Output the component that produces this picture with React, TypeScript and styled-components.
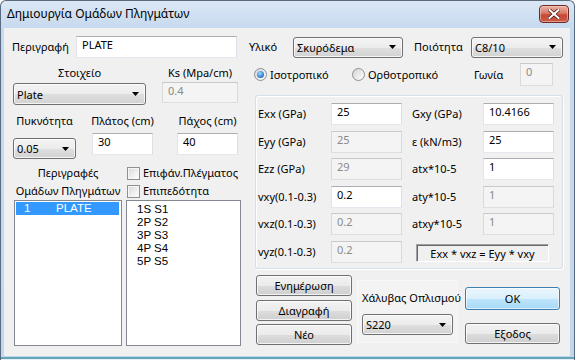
import React from 'react';
import styled, { createGlobalStyle, css } from 'styled-components';

const GlobalStyle = createGlobalStyle`
  html, body { margin: 0; padding: 0; background: #ffffff; }
  body { font-family: "Noto Sans", Tahoma, sans-serif; font-size: 11px; color: #000; }
  * { box-sizing: border-box; }
`;

const Window = styled.div`
  width: 575px;
  height: 360px;
  display: flex;
  flex-direction: column;
  border: 1px solid #5a6b80;
  border-bottom: none;
  border-radius: 6px 6px 0 0;
  background: linear-gradient(to bottom, #dbe7f5 0px, #c7daef 27px, #c2d6ed 100%);
  box-shadow: inset 0 -1px 0 #e6eff7, inset 0 -3px 0 #64a6b9;
  overflow: hidden;
`;

const TitleBar = styled.div`
  height: 27px;
  flex: none;
  display: flex;
  align-items: flex-start;
  justify-content: space-between;
  padding-left: 6px;
`;

const Title = styled.span`
  font: 12px "Noto Sans", sans-serif;
  line-height: 16px;
  margin-top: 5px;
  color: #000;
`;

const CloseButton = styled.div`
  width: 30px;
  height: 18px;
  margin: 4px 5px 0 0;
  border: 1px solid #6e2a22;
  border-radius: 4px;
  background: linear-gradient(to bottom, #eab0a4 0%, #d97a68 45%, #c84a36 55%, #c95a45 100%);
  box-shadow: inset 0 0 0 1px rgba(255, 220, 210, 0.5);
  display: flex;
  align-items: center;
  justify-content: center;
`;

const Client = styled.div`
  flex: 1;
  margin: 0 4px 4px 3px;
  background: #f0f0f0;
  display: flex;
`;

const LeftCol = styled.div`
  width: 245px;
  flex: none;
  display: flex;
  flex-direction: column;
`;

const RightCol = styled.div`
  flex: 1;
  display: flex;
  flex-direction: column;
`;

const Row = styled.div<{ $top: number; $left?: number; $h?: number }>`
  display: flex;
  align-items: center;
  margin-top: ${(p) => p.$top}px;
  padding-left: ${(p) => p.$left ?? 0}px;
  ${(p) => (p.$h ? `height: ${p.$h}px;` : '')}
`;

const FieldRow = styled.div<{ $top: number; $left?: number }>`
  display: flex;
  align-items: flex-start;
  margin-top: ${(p) => p.$top}px;
  padding-left: ${(p) => p.$left ?? 0}px;
`;

const Field = styled.div<{ $w: number; $ml?: number }>`
  width: ${(p) => p.$w}px;
  margin-left: ${(p) => p.$ml ?? 0}px;
  display: flex;
  flex-direction: column;
  align-items: center;
  flex: none;
`;

const Label = styled.span<{ $w?: number; $ml?: number }>`
  display: inline-block;
  ${(p) => (p.$w ? `width: ${p.$w}px;` : '')}
  margin-left: ${(p) => p.$ml ?? 0}px;
  white-space: nowrap;
  line-height: 14px;
  flex: none;
`;

const TextBox = styled.div<{ $w: number; $h?: number; $mt?: number; $disabled?: boolean }>`
  width: ${(p) => p.$w}px;
  height: ${(p) => p.$h ?? 22}px;
  margin-top: ${(p) => p.$mt ?? 0}px;
  flex: none;
  padding: 1px 5px 0;
  line-height: 14px;
  white-space: nowrap;
  border: 1px solid;
  border-color: #abadb3 #dbdfe6 #e3e9ef #e2e3ea;
  background: #ffffff;
  color: #000;
  ${(p) =>
    p.$disabled &&
    css`
      background: #f4f4f4;
      border-color: #c9c9c9 #d9d9d9 #dedede #d9d9d9;
      color: #8a8a8a;
    `}
`;

const Dropdown = styled.div<{ $w: number; $h?: number; $mt?: number }>`
  width: ${(p) => p.$w}px;
  height: ${(p) => p.$h ?? 21}px;
  margin-top: ${(p) => p.$mt ?? 0}px;
  flex: none;
  display: flex;
  align-items: center;
  justify-content: space-between;
  padding: 0 6px 0 3px;
  border: 1px solid #707070;
  border-radius: 3px;
  background: linear-gradient(to bottom, #f4f4f4 0%, #ececec 50%, #dfdfdf 51%, #d2d2d2 100%);
  box-shadow: inset 0 0 0 1px rgba(255, 255, 255, 0.75);
  white-space: nowrap;
`;

const Button = styled.div<{ $h?: number; $mt?: number; $default?: boolean }>`
  height: ${(p) => p.$h ?? 21}px;
  margin-top: ${(p) => p.$mt ?? 0}px;
  display: flex;
  align-items: center;
  justify-content: center;
  border: 1px solid #707070;
  border-radius: 3px;
  background: linear-gradient(to bottom, #f2f2f2 0%, #ebebeb 50%, #dddddd 51%, #cfcfcf 100%);
  box-shadow: inset 0 0 0 1px rgba(255, 255, 255, 0.75);
  white-space: nowrap;
  ${(p) =>
    p.$default &&
    css`
      border-color: #3c7fb1;
      background: linear-gradient(to bottom, #eaf6fd 0%, #d9f0fc 50%, #bee6fd 51%, #a7d9f5 100%);
      box-shadow: inset 0 0 0 1px rgba(255, 255, 255, 0.6);
    `}
`;

const ListBox = styled.div<{ $w: number }>`
  width: ${(p) => p.$w}px;
  height: 146px;
  border: 1px solid #828790;
  background: #ffffff;
  padding-top: 1px;
  flex: none;
`;

const ListRow = styled.div<{ $selected?: boolean }>`
  height: 13px;
  line-height: 13px;
  padding-left: 8px;
  margin: 0 2px 0 1px;
  white-space: nowrap;
  display: flex;
  font-family: "Liberation Sans", Arial, sans-serif;
  font-size: 11.5px;
  ${(p) =>
    p.$selected &&
    css`
      background: #3399ff;
      color: #ffffff;
    `}
`;

const IndexCell = styled.span`
  width: 32px;
  flex: none;
`;

const PlainItems = styled.div`
  padding: 1px 0 0 10px;
`;

const PlainItem = styled.div`
  height: 13px;
  line-height: 13px;
  font-family: "Liberation Sans", Arial, sans-serif;
  font-size: 11.5px;
  white-space: nowrap;
`;

const Lists = styled.div`
  display: flex;
  padding-left: 10px;
  margin-top: 5px;
`;

const ListColumn = styled.div<{ $w: number; $ml?: number }>`
  width: ${(p) => p.$w}px;
  margin-left: ${(p) => p.$ml ?? 0}px;
  display: flex;
  flex-direction: column;
`;

const ListHeader = styled.div<{ $center?: boolean }>`
  height: 36px;
  display: flex;
  flex-direction: column;
  align-items: ${(p) => (p.$center ? 'center' : 'flex-start')};
  line-height: 18px;
  white-space: nowrap;
`;

const CheckLine = styled.label`
  display: flex;
  align-items: center;
  height: 18px;
  padding-left: 1px;
  white-space: nowrap;
`;

const CheckBox = styled.span`
  width: 13px;
  height: 13px;
  margin-right: 3px;
  border: 1px solid #8e8f8f;
  background: linear-gradient(135deg, #d8d8d8 0%, #f0f0f0 60%, #ffffff 100%);
  box-shadow: inset 0 0 0 1px #f6f6f6;
  flex: none;
`;

const RadioItem = styled.div<{ $w: number; $ml?: number }>`
  width: ${(p) => p.$w}px;
  margin-left: ${(p) => p.$ml ?? 0}px;
  display: flex;
  align-items: center;
  flex: none;
  white-space: nowrap;
`;

const RadioDot = styled.span<{ $checked?: boolean }>`
  width: 13px;
  height: 13px;
  margin-right: 3px;
  border-radius: 50%;
  border: 1px solid #8e8f8f;
  background: linear-gradient(135deg, #d4d4d4 0%, #f2f2f2 70%, #ffffff 100%);
  display: flex;
  align-items: center;
  justify-content: center;
  flex: none;
  ${(p) =>
    p.$checked &&
    css`
      &::after {
        content: '';
        width: 7px;
        height: 7px;
        border-radius: 50%;
        background: radial-gradient(circle at 40% 35%, #a6dcff 0%, #3f8ad6 55%, #1c4d8c 100%);
      }
    `}
`;

const GroupBox = styled.div`
  width: 308px;
  height: 174px;
  margin: 9px 0 0 6px;
  border: 1px solid #d5dfe5;
  border-radius: 3px;
  box-shadow: inset 1px 1px 0 #ffffff, 1px 1px 0 #ffffff;
  padding: 7px 0 0 2px;
  display: grid;
  grid-template-columns: 73px 81px 71px 71px;
  grid-auto-rows: 22px;
  row-gap: 5.6px;
  align-items: center;
`;

const Formula = styled.div`
  grid-column: 3 / span 2;
  width: 133px;
  height: 18px;
  margin: 3px 0 0 4px;
  border: 1px solid;
  border-color: #a0a0a0 #ffffff #ffffff #a0a0a0;
  box-shadow: inset 1px 1px 0 #696969;
  display: flex;
  align-items: center;
  justify-content: center;
  white-space: nowrap;
`;

const BottomRow = styled.div`
  display: flex;
  align-items: flex-start;
  margin: 6px 0 0 7px;
`;

const ButtonCol = styled.div<{ $w: number; $ml?: number }>`
  width: ${(p) => p.$w}px;
  margin-left: ${(p) => p.$ml ?? 0}px;
  display: flex;
  flex-direction: column;
  flex: none;
`;

const SteelPanel = styled.div`
  width: 101px;
  height: 63px;
  margin: 5px 0 0 5px;
  background: #f3f3f3;
  border: 1px solid #f8f8f8;
  padding: 10px 0 0 4px;
  display: flex;
  flex-direction: column;
  flex: none;
`;

const Arrow = () => (
  <svg width="7" height="4" viewBox="0 0 7 4">
    <path d="M0 0h7L3.5 4z" fill="#000" />
  </svg>
);

const CloseX = () => (
  <svg width="12" height="10" viewBox="0 0 12 10">
    <path d="M1.5 1l9 8M10.5 1l-9 8" stroke="#5a1c14" strokeWidth="3.6" strokeLinecap="square" />
    <path d="M1.5 1l9 8M10.5 1l-9 8" stroke="#ffffff" strokeWidth="2" strokeLinecap="square" />
  </svg>
);

type Prop = { label: string; value: string; disabled?: boolean };

const leftProps: Prop[] = [
  { label: 'Exx (GPa)', value: '25' },
  { label: 'Eyy (GPa)', value: '25', disabled: true },
  { label: 'Ezz (GPa)', value: '29', disabled: true },
  { label: 'vxy(0.1-0.3)', value: '0.2' },
  { label: 'vxz(0.1-0.3)', value: '0.2', disabled: true },
  { label: 'vyz(0.1-0.3)', value: '0.2', disabled: true },
];

const rightProps: Prop[] = [
  { label: 'Gxy (GPa)', value: '10.4166' },
  { label: 'ε (kN/m3)', value: '25' },
  { label: 'atx*10-5', value: '1' },
  { label: 'aty*10-5', value: '1', disabled: true },
  { label: 'atxy*10-5', value: '1', disabled: true },
];

const meshItems = ['1S S1', '2P S2', '3P S3', '4P S4', '5P S5'];

export default function App() {
  const cells: React.ReactNode[] = [];
  leftProps.forEach((l, i) => {
    cells.push(<Label key={`ll${i}`}>{l.label}</Label>);
    cells.push(
      <TextBox key={`lv${i}`} $w={71} $disabled={l.disabled}>
        {l.value}
      </TextBox>
    );
    const r = rightProps[i];
    if (r) {
      cells.push(<Label key={`rl${i}`}>{r.label}</Label>);
      cells.push(
        <TextBox key={`rv${i}`} $w={71} $disabled={r.disabled}>
          {r.value}
        </TextBox>
      );
    } else {
      cells.push(<Formula key="formula">Exx * vxz = Eyy * vxy</Formula>);
    }
  });

  return (
    <>
      <GlobalStyle />
      <Window>
        <TitleBar>
          <Title>Δημιουργία Ομάδων Πληγμάτων</Title>
          <CloseButton>
            <CloseX />
          </CloseButton>
        </TitleBar>
        <Client>
          <LeftCol>
            <Row $top={8} $left={8} $h={22}>
              <Label $w={64}>Περιγραφή</Label>
              <TextBox $w={161}>PLATE</TextBox>
            </Row>
            <FieldRow $top={8} $left={9}>
              <Field $w={133}>
                <Label>Στοιχείο</Label>
                <Dropdown $w={133} $h={22} $mt={3}>
                  <span>Plate</span>
                  <Arrow />
                </Dropdown>
              </Field>
              <Field $w={76} $ml={16}>
                <Label>Ks (Mpa/cm)</Label>
                <TextBox $w={76} $h={21} $mt={2} $disabled>
                  0.4
                </TextBox>
              </Field>
            </FieldRow>
            <FieldRow $top={9} $left={9}>
              <Field $w={63}>
                <Label>Πυκνότητα</Label>
                <Dropdown $w={63} $h={21} $mt={10}>
                  <span>0.05</span>
                  <Arrow />
                </Dropdown>
              </Field>
              <Field $w={61} $ml={16}>
                <Label>Πλάτος (cm)</Label>
                <TextBox $w={61} $h={22} $mt={5}>
                  30
                </TextBox>
              </Field>
              <Field $w={61} $ml={24}>
                <Label>Πάχος (cm)</Label>
                <TextBox $w={61} $h={22} $mt={5}>
                  40
                </TextBox>
              </Field>
            </FieldRow>
            <Lists>
              <ListColumn $w={108}>
                <ListHeader $center>
                  <span>Περιγραφές</span>
                  <span>Ομάδων Πληγμάτων</span>
                </ListHeader>
                <ListBox $w={108}>
                  <ListRow $selected>
                    <IndexCell>1</IndexCell>
                    <span>PLATE</span>
                  </ListRow>
                </ListBox>
              </ListColumn>
              <ListColumn $w={115} $ml={4}>
                <ListHeader>
                  <CheckLine>
                    <CheckBox />
                    Επιφάν.Πλέγματος
                  </CheckLine>
                  <CheckLine>
                    <CheckBox />
                    Επιπεδότητα
                  </CheckLine>
                </ListHeader>
                <ListBox $w={115}>
                  <PlainItems>
                    {meshItems.map((m) => (
                      <PlainItem key={m}>{m}</PlainItem>
                    ))}
                  </PlainItems>
                </ListBox>
              </ListColumn>
            </Lists>
          </LeftCol>
          <RightCol>
            <Row $top={8} $h={22}>
              <Label $w={44}>Υλικό</Label>
              <Dropdown $w={110}>
                <span>Σκυρόδεμα</span>
                <Arrow />
              </Dropdown>
              <Label $w={57} $ml={11}>
                Ποιότητα
              </Label>
              <Dropdown $w={92}>
                <span>C8/10</span>
                <Arrow />
              </Dropdown>
            </Row>
            <Row $top={5} $h={23}>
              <RadioItem $w={98} $ml={5}>
                <RadioDot $checked />
                Ισοτροπικό
              </RadioItem>
              <RadioItem $w={122}>
                <RadioDot />
                Ορθοτροπικό
              </RadioItem>
              <Label $w={46}>Γωνία</Label>
              <TextBox $w={33} $h={23} $disabled>
                0
              </TextBox>
            </Row>
            <GroupBox>{cells}</GroupBox>
            <BottomRow>
              <ButtonCol $w={96}>
                <Button>Ενημέρωση</Button>
                <Button $mt={3.5}>Διαγραφή</Button>
                <Button $mt={3.5}>Νέο</Button>
              </ButtonCol>
              <SteelPanel>
                <Label>Χάλυβας Οπλισμού</Label>
                <Dropdown $w={91} $mt={9}>
                  <span>S220</span>
                  <Arrow />
                </Dropdown>
              </SteelPanel>
              <ButtonCol $w={95} $ml={7}>
                <Button $h={23} $mt={12} $default>
                  OK
                </Button>
                <Button $mt={13}>Εξοδος</Button>
              </ButtonCol>
            </BottomRow>
          </RightCol>
        </Client>
      </Window>
    </>
  );
}
